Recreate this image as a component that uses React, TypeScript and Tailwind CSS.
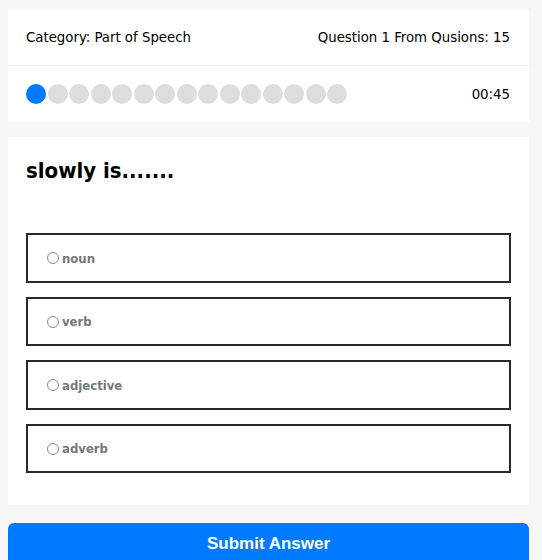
import React from "react";

const options = ["noun", "verb", "adjective", "adverb"];

export default function App() {
  const dots = Array.from({ length: 15 }, (_, i) => i);
  return (
    <div className="min-h-[560px] w-[542px] bg-[#f7f7f7] pt-[10px] px-[8px] overflow-hidden" style={{ fontFamily: "Tahoma, 'DejaVu Sans Condensed', 'Liberation Sans', sans-serif" }}>
      <div className="w-[521px] bg-white">
        <div className="flex h-[56px] items-center justify-between px-[18px] pr-[19px] text-[14.8px] text-black border-b border-[#eeeeee]">
          <span>Category: Part of Speech</span>
          <span>Question 1 From Qusions: 15</span>
        </div>
        <div className="flex h-[56px] items-center justify-between px-[18px] pr-[19px] text-[14.8px] text-black">
          <div className="flex gap-[1.5px]">
            {dots.map((i) => (
              <span
                key={i}
                className={
                  i === 0
                    ? "block h-[20px] w-[20px] rounded-full bg-[#007bff]"
                    : "block h-[20px] w-[20px] rounded-full bg-[#dddddd]"
                }
              />
            ))}
          </div>
          <span>00:45</span>
        </div>
      </div>

      <div className="mt-[15px] w-[521px] bg-white px-[18px] pt-[18px] pb-[32px]">
        <h2 className="text-[22px] font-bold leading-[32px] text-black">slowly is.......</h2>
        <div className="mt-[46px] flex flex-col gap-[14px]">
          {options.map((o) => (
            <div key={o} className="flex h-[49.5px] w-[485px] items-center border-2 border-[#2a2a2a] pl-[19px] pt-[1px]">
              <span className="mr-[3px] block h-[12px] w-[12px] rounded-full border border-[#8a8a8a] bg-white" />
              <span className="text-[13px] font-bold text-[#777777]">{o}</span>
            </div>
          ))}
        </div>
      </div>

      <button
        className="mt-[18px] flex h-[45px] w-[521px] items-center justify-center rounded-[6px] bg-[#007bff] pb-[3px] text-[17px] font-bold text-white"
        style={{ fontFamily: "'Liberation Sans', Arial, sans-serif" }}
      >
        Submit Answer
      </button>
    </div>
  );
}
